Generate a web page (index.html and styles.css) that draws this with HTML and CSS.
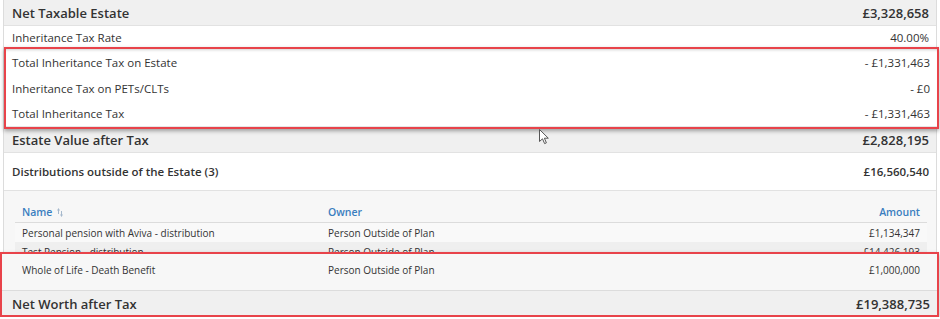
FILE: index.html
```html
<!DOCTYPE html>
<html lang="en">
<head>
    <meta charset="UTF-8">
    <meta name="viewport" content="width=device-width, initial-scale=1.0">
    <title>Estate Summary</title>
    <link rel="stylesheet" href="styles.css">
</head>
<body>
    <div class="panel">
        <div class="row row-total">
            <span>Net Taxable Estate</span>
            <span>£3,328,658</span>
        </div>
        <div class="row row-rate">
            <span>Inheritance Tax Rate</span>
            <span>40.00%</span>
        </div>

        <!-- tax lines, boxed -->
        <div class="callout callout-tax">
            <div class="row row-line">
                <span>Total Inheritance Tax on Estate</span>
                <span>- £1,331,463</span>
            </div>
            <div class="row row-line">
                <span>Inheritance Tax on PETs/CLTs</span>
                <span>- £0</span>
            </div>
            <div class="row row-line row-last">
                <span>Total Inheritance Tax</span>
                <span>- £1,331,463</span>
            </div>
        </div>

        <div class="row row-total row-after">
            <span>Estate Value after Tax</span>
            <span>£2,828,195</span>
        </div>
        <div class="row row-group">
            <span>Distributions outside of the Estate (3)</span>
            <span>£16,560,540</span>
        </div>

        <div class="dist">
            <table class="dist-table">
                <colgroup><col class="col-name"><col class="col-owner"><col></colgroup>
                <thead>
                    <tr>
                        <th>Name
                            <svg class="sort" width="6" height="9" viewBox="0 0 6 9">
                                <path d="M1.5 0 L0 2.5 H1 V6 H2 V2.5 H3 Z" fill="#a5b8cc"/>
                                <path d="M4.5 9 L6 6.5 H5 V3 H4 V6.5 H3 Z" fill="#a5b8cc"/>
                            </svg>
                        </th>
                        <th>Owner</th>
                        <th class="num">Amount</th>
                    </tr>
                </thead>
                <tbody>
                    <tr>
                        <td>Personal pension with Aviva - distribution</td>
                        <td>Person Outside of Plan</td>
                        <td class="num">£1,134,347</td>
                    </tr>
                    <tr class="striped">
                        <td>Test Pension - distribution</td>
                        <td>Person Outside of Plan</td>
                        <td class="num">£14,426,193</td>
                    </tr>
                </tbody>
            </table>
        </div>

        <!-- last distribution + net worth, boxed -->
        <div class="callout callout-worth">
            <div class="dist dist-tail">
                <table class="dist-table">
                    <colgroup><col class="col-name"><col class="col-owner"><col></colgroup>
                    <tbody>
                        <tr>
                            <td>Whole of Life - Death Benefit</td>
                            <td>Person Outside of Plan</td>
                            <td class="num">£1,000,000</td>
                        </tr>
                    </tbody>
                </table>
            </div>
            <div class="row row-total row-worth">
                <span>Net Worth after Tax</span>
                <span>£19,388,735</span>
            </div>
        </div>
    </div>

    <svg class="pointer" width="11" height="16" viewBox="0 0 11 16">
        <path d="M0.5 0.5 V12.5 L3.5 9.8 L5.6 14.6 L7.4 13.8 L5.4 9.2 H9.3 Z" fill="#fff" stroke="#555" stroke-width="1" stroke-linejoin="round"/>
    </svg>
</body>
</html>
```

FILE: styles.css
```css
body{
    margin: 0;
    background: #fff;
    font-family: "Open Sans", "Liberation Sans", sans-serif;
    color: #333;
    position: relative;
}

.panel{
    width: 932px;
    margin-left: 3px;
    border-left: 1px solid #dcdcdc;
    border-right: 1px solid #dcdcdc;
}

.row{
    display: flex;
    justify-content: space-between;
    align-items: center;
    box-sizing: border-box;
    padding: 0 7px 0 8px;
    font-size: 11.5px;
    border-bottom: 1px solid #e2e2e2;
}

.row-total{
    height: 26px;
    background: #f0f0f0;
    font-size: 13px;
    font-weight: 600;
}

.row-rate{
    height: 21px;
    padding-top: 2px;
    border-bottom: none;
}

.row-after{
    height: 24px;
    padding-bottom: 2px;
}

.row-group{
    height: 38px;
    font-size: 11.5px;
    font-weight: 600;
}

/* boxed rows */
.callout{
    position: relative;
    border: 2px solid #e8434a;
    background: #fff;
    box-shadow: 0 2px 4px rgba(0, 0, 0, 0.35), inset 0 3px 3px -2px rgba(0, 0, 0, 0.18);
}

.callout-tax{
    margin-right: -3px;
}

.callout-tax .row-line{
    height: 26px;
    padding: 0 7px 0 6px;
    border-bottom: none;
}

.callout-tax .row-last{
    height: 26px;
    border-bottom: 1px solid #e6e6e6;
}

.callout-worth{
    margin: -9px -3px 0 -4px;
    background: #f7f7f7;
}

.callout-worth .row-worth{
    height: 24px;
    padding: 1px 7px 0 10px;
    border-bottom: none;
}

/* distributions table */
.dist{
    background: #f7f7f7;
    padding: 10px 9px 0 11px;
}

.dist-table{
    width: 100%;
    border-collapse: collapse;
    table-layout: fixed;
    font-size: 10px;
}

.col-name{ width: 306px; }
.col-owner{ width: 400px; }

.dist-table th{
    height: 21px;
    padding: 0 7px;
    text-align: left;
    font-weight: 600;
    font-size: 10.5px;
    color: #3a7ebf;
    border-bottom: 1px solid #dcdcdc;
}

.dist-table td{
    height: 19px;
    padding: 0 7px;
    background: #f9f9f9;
    white-space: nowrap;
}

.dist-table .striped td{
    background: #efefef;
}

.dist-table .num{
    text-align: right;
}

.sort{
    margin-left: 2px;
    vertical-align: -1px;
}

.dist-tail{
    padding: 6px 10px 11px 13px;
    background: #f7f7f7;
    border-bottom: 1px solid #dcdcdc;
}

.dist-tail .dist-table td{
    background: #f7f7f7;
}

/* mouse pointer over the page */
.pointer{
    position: absolute;
    left: 539px;
    top: 129px;
}
```
